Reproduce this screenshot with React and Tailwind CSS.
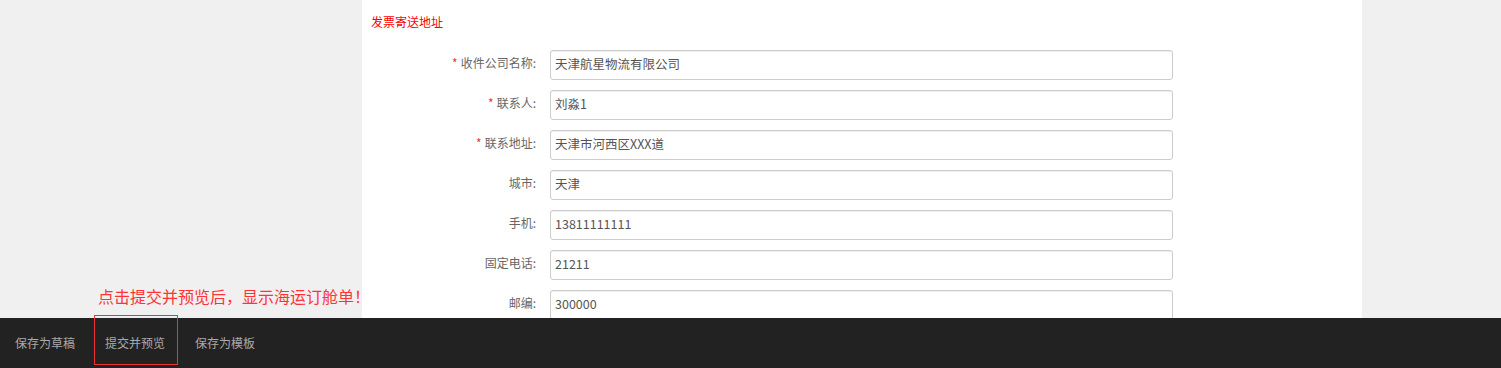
import React from "react";

const fields = [
  { label: "收件公司名称:", value: "天津航星物流有限公司", required: true },
  { label: "联系人:", value: "刘淼1", required: true },
  { label: "联系地址:", value: "天津市河西区XXX道", required: true },
  { label: "城市:", value: "天津" },
  { label: "手机:", value: "13811111111" },
  { label: "固定电话:", value: "21211" },
  { label: "邮编:", value: "300000" },
];

const App = () => {
  return (
    <div
      className="relative h-[368px] w-full overflow-hidden bg-[#f0f0f0] text-[12px]"
      style={{ fontFamily: '"Noto Sans CJK SC", "Microsoft YaHei", sans-serif' }}
    >
      {/* Form panel */}
      <div className="ml-[362px] w-[1000px] h-full bg-white">
        <div className="pl-[9px] pt-[13px] text-[12px] leading-[18px] text-[#ff0000]">
          发票寄送地址
        </div>

        <div className="mt-[19px] flex flex-col gap-[10px]">
          {fields.map((f) => (
            <div key={f.label} className="flex items-center h-[30px]">
              <label className="w-[174px] text-right text-[#666] leading-[18px] -mt-[4px]">
                {f.required && <span className="text-[#e4393c] mr-[3px]">*</span>}
                {f.label}
              </label>
              <input
                readOnly
                value={f.value}
                className="ml-[14px] w-[623px] h-[30px] rounded-[3px] border border-[#ccc] bg-white px-[4px] pt-0 pb-[3px] text-[12.5px] text-[#555] shadow-[inset_0_1px_1px_rgba(0,0,0,0.075)] outline-none"
              />
            </div>
          ))}
        </div>
      </div>

      {/* Annotation */}
      <div className="absolute left-[98px] top-[285px] text-[16px] leading-[22px] text-[#ff3333]">
        点击提交并预览后，显示海运订舱单！
      </div>

      {/* Bottom toolbar */}
      <div className="absolute left-0 right-0 bottom-0 h-[50px] bg-[#222] flex items-center text-[12px] text-[#aaa]">
        <button className="px-[15px] h-full">保存为草稿</button>
        <button className="px-[15px] h-full">提交并预览</button>
        <button className="px-[15px] h-full">保存为模板</button>
      </div>

      {/* Highlight box */}
      <div className="absolute left-[94px] top-[315px] w-[84px] h-[50px] border border-[#ee3333]" />
    </div>
  );
};

export default App;
